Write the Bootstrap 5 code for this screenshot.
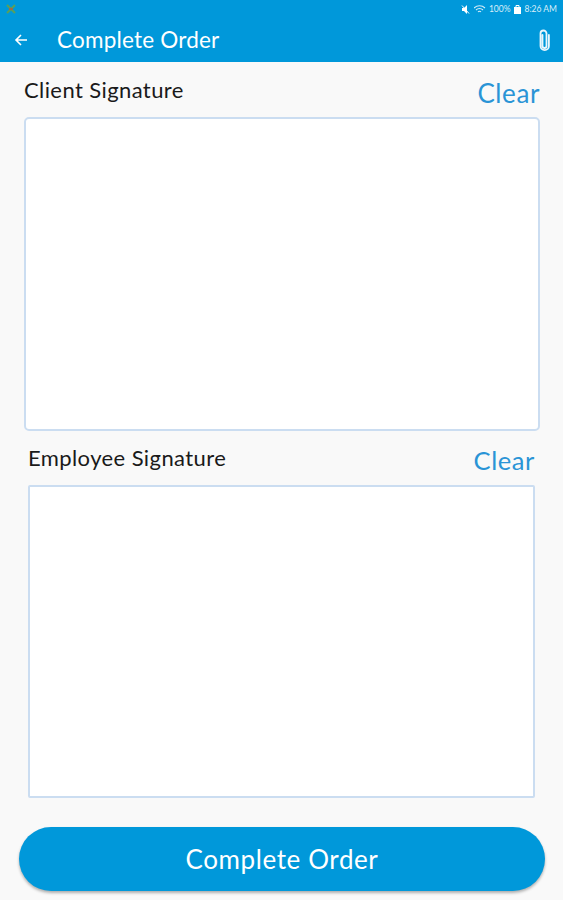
<!DOCTYPE html>
<html lang="en">
<head>
<meta charset="utf-8">
<title>Complete Order</title>
<link rel="stylesheet" href="https://cdn.jsdelivr.net/npm/bootstrap@5.3.0/dist/css/bootstrap.min.css">
<style>
html,body{height:900px;overflow:hidden}
body{background:#f9f9f9;font-family:Lato,"Liberation Sans",sans-serif;color:#1b1b1b}
.app-head{background:#0098da;height:62px;color:#fff}
.status-row{height:18px;padding:0 6px 0 6px;font-size:8.500px;line-height:18px;color:#d8eef9;gap:3px}
.status-time{margin-left:1px}
.tool-row{height:44px;padding:0 12px 0 14px}
.tool-title{font-size:22.500px;margin-left:29px;letter-spacing:.2px;line-height:1}
.sig-one{padding:0 23px 0 24px}
.sig-two{padding:0 28px 0 28px;margin-top:14px}
.sig-head-one{height:55px;padding-top:14px}
.sig-label{font-size:22px;line-height:28px;letter-spacing:.4px;color:#1a1a1a}
.sig-clear{font-size:26px;line-height:32px;color:#2a94d6;letter-spacing:.6px;background:none;border:0;padding:0}
.sig-head-one .sig-clear{margin-top:1px}
.sig-two .sig-clear{font-size:25.500px}
.sig-head-two{height:41px;margin-top:-1px}
.sig-pad{background:#fff;border:2px solid #cbddf1}
.pad-one{height:314px;border-radius:5px}
.pad-two{height:313px;border-radius:2px}
.done-wrap{padding:0 18px 0 19px;margin-top:29px}
.done-btn{height:64px;border-radius:32px;background:#0098da;color:#fff;font-size:26px;letter-spacing:.6px;border:0;box-shadow:0 2px 3px rgba(0,0,0,.3)}
.done-btn:hover{background:#0098da;color:#fff}
</style>
</head>
<body>
<header class="app-head">
  <div class="status-row d-flex align-items-center">
    <svg width="10" height="10" viewBox="0 0 10 10"><path d="M1 1l8 8M9 1L1 9" stroke="#5aa05a" stroke-width="2"/><path d="M3 5h4" stroke="#a06a4a" stroke-width="2"/></svg>
    <span class="ms-auto d-flex align-items-center" style="gap:3px">
      <svg width="10" height="9" viewBox="0 0 10 9"><path d="M1 3h2l3-3v9L3 6H1z" fill="#fff"/><path d="M1 .5l7 8" stroke="#fff" stroke-width="1"/></svg>
      <svg width="12" height="9" viewBox="0 0 12 9"><path d="M0 3a8 8 0 0 1 11 0M2 5a5 5 0 0 1 7 0M4 7a2 2 0 0 1 3 0" fill="none" stroke="#d5ecf8" stroke-width="1.100"/></svg>
      <span>100%</span>
      <svg width="7" height="9" viewBox="0 0 7 9"><path d="M0 2h7v7H0z" fill="#fff"/><path d="M2 2V.5h3V2" fill="none" stroke="#fff"/></svg>
      <span class="status-time">8:26 AM</span>
    </span>
  </div>
  <div class="tool-row d-flex align-items-center">
    <svg width="14" height="14" viewBox="0 0 14 14"><path d="M13 7H2M7 2L2 7l5 5" fill="none" stroke="#fff" stroke-width="1.600"/></svg>
    <span class="tool-title">Complete Order</span>
    <svg class="ms-auto" width="13" height="23" viewBox="0 0 13 23"><path d="M4.500 6v11a2 2 0 0 0 4 0V4.500a3 3 0 0 0-6 0V17a4.200 4.200 0 0 0 8.400 0V6" fill="none" stroke="#eaf6fc" stroke-width="1.800" stroke-linecap="round"/></svg>
  </div>
</header>
<main>
  <section class="sig-one">
    <div class="sig-head-one d-flex justify-content-between align-items-start">
      <span class="sig-label">Client Signature</span>
      <button type="button" class="sig-clear">Clear</button>
    </div>
    <div class="sig-pad pad-one"></div>
  </section>
  <section class="sig-two">
    <div class="sig-head-two d-flex justify-content-between align-items-start">
      <span class="sig-label">Employee Signature</span>
      <button type="button" class="sig-clear">Clear</button>
    </div>
    <div class="sig-pad pad-two"></div>
  </section>
  <div class="done-wrap">
    <button type="button" class="btn done-btn w-100">Complete Order</button>
  </div>
</main>
<script src="https://cdn.jsdelivr.net/npm/bootstrap@5.3.0/dist/js/bootstrap.bundle.min.js"></script>
</body>
</html>
